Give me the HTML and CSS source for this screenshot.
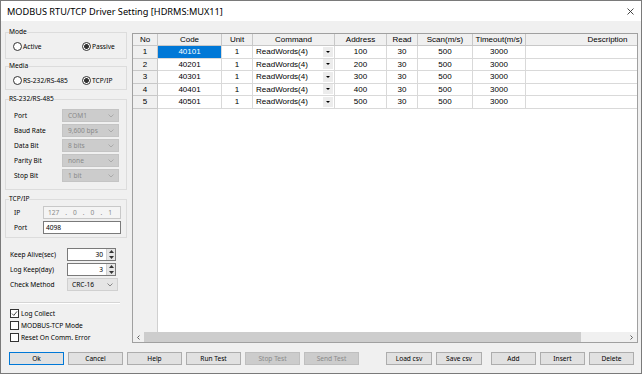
FILE: index.html
```html
<!DOCTYPE html>
<html lang="en">

<head>
    <meta charset="UTF-8">
    <title>MODBUS RTU/TCP Driver Setting</title>
    <link rel="stylesheet" href="styles.css">
</head>

<body>
    <div class="window">
        <div class="titlebar">
            <span class="title">MODBUS RTU/TCP Driver Setting [HDRMS:MUX11]</span>
            <svg class="close" width="7" height="7" viewBox="0 0 7 7">
                <path d="M0.5 0.5 L6.5 6.5 M6.5 0.5 L0.5 6.5" stroke="#333" stroke-width="0.9" fill="none" />
            </svg>
        </div>

        <div class="main">
            <div class="side">
                <fieldset class="group mode">
                    <legend>Mode</legend>
                    <div class="radios">
                        <label class="radio"><i></i>Active</label>
                        <label class="radio on"><i></i>Passive</label>
                    </div>
                </fieldset>

                <fieldset class="group media">
                    <legend>Media</legend>
                    <div class="radios">
                        <label class="radio"><i></i>RS-232/RS-485</label>
                        <label class="radio on"><i></i>TCP/IP</label>
                    </div>
                </fieldset>

                <fieldset class="group serial">
                    <legend>RS-232/RS-485</legend>
                    <div class="fields">
                        <div class="field"><span>Port</span><div class="combo off">COM1<svg width="6" height="4" viewBox="0 0 6 4"><path d="M0.5 0.5 L3 3 L5.5 0.5" stroke="#aaa" fill="none" /></svg></div></div>
                        <div class="field"><span>Baud Rate</span><div class="combo off">9,600 bps<svg width="6" height="4" viewBox="0 0 6 4"><path d="M0.5 0.5 L3 3 L5.5 0.5" stroke="#aaa" fill="none" /></svg></div></div>
                        <div class="field"><span>Data Bit</span><div class="combo off">8 bits<svg width="6" height="4" viewBox="0 0 6 4"><path d="M0.5 0.5 L3 3 L5.5 0.5" stroke="#aaa" fill="none" /></svg></div></div>
                        <div class="field"><span>Parity Bit</span><div class="combo off">none<svg width="6" height="4" viewBox="0 0 6 4"><path d="M0.5 0.5 L3 3 L5.5 0.5" stroke="#aaa" fill="none" /></svg></div></div>
                        <div class="field"><span>Stop Bit</span><div class="combo off">1 bit<svg width="6" height="4" viewBox="0 0 6 4"><path d="M0.5 0.5 L3 3 L5.5 0.5" stroke="#aaa" fill="none" /></svg></div></div>
                    </div>
                </fieldset>

                <fieldset class="group tcp">
                    <legend>TCP/IP</legend>
                    <div class="fields">
                        <div class="field"><span>IP</span>
                            <div class="ip"><span>127</span><span>.</span><span>0</span><span>.</span><span>0</span><span>.</span><span>1</span></div>
                        </div>
                        <div class="field"><span>Port</span><div class="text-box">4098</div></div>
                    </div>
                </fieldset>

                <div class="options">
                    <div class="field"><span>Keep Alive(sec)</span>
                        <div class="spin"><span>30</span><div class="arrows"><svg width="5" height="3" viewBox="0 0 5 3"><path d="M0 3 L2.5 0 L5 3Z" fill="#333" /></svg><svg width="5" height="3" viewBox="0 0 5 3"><path d="M0 0 L2.5 3 L5 0Z" fill="#333" /></svg></div></div>
                    </div>
                    <div class="field"><span>Log Keep(day)</span>
                        <div class="spin"><span>3</span><div class="arrows"><svg width="5" height="3" viewBox="0 0 5 3"><path d="M0 3 L2.5 0 L5 3Z" fill="#333" /></svg><svg width="5" height="3" viewBox="0 0 5 3"><path d="M0 0 L2.5 3 L5 0Z" fill="#333" /></svg></div></div>
                    </div>
                    <div class="field"><span>Check Method</span>
                        <div class="combo method">CRC-16<svg width="6" height="4" viewBox="0 0 6 4"><path d="M0.5 0.5 L3 3 L5.5 0.5" stroke="#888" fill="none" /></svg></div>
                    </div>
                </div>

                <div class="sep"></div>

                <div class="checks">
                    <label class="check on"><i><svg width="7" height="7" viewBox="0 0 7 7"><path d="M1 3.6 L2.8 5.4 L6 1.4" stroke="#333" stroke-width="0.9" fill="none" /></svg></i>Log Collect</label>
                    <label class="check"><i></i>MODBUS-TCP Mode</label>
                    <label class="check"><i></i>Reset On Comm. Error</label>
                </div>
            </div>

            <div class="grid">
                <div class="view">
                    <div class="sheet">
                        <div class="hd">No</div><div class="hd">Code</div><div class="hd">Unit</div><div class="hd">Command</div><div class="hd">Address</div><div class="hd">Read</div><div class="hd">Scan(m/s)</div><div class="hd">Timeout(m/s)</div><div class="hd">Description</div>

                        <div class="rh">1</div><div class="sel">40101</div><div>1</div><div class="cmd">ReadWords(4)<span class="drop"><svg width="4" height="2" viewBox="0 0 4 2"><path d="M0 0 L2 2 L4 0Z" fill="#000" /></svg></span></div><div>100</div><div>30</div><div>500</div><div>3000</div><div></div>

                        <div class="rh">2</div><div>40201</div><div>1</div><div class="cmd">ReadWords(4)<span class="drop"><svg width="4" height="2" viewBox="0 0 4 2"><path d="M0 0 L2 2 L4 0Z" fill="#000" /></svg></span></div><div>200</div><div>30</div><div>500</div><div>3000</div><div></div>

                        <div class="rh">3</div><div>40301</div><div>1</div><div class="cmd">ReadWords(4)<span class="drop"><svg width="4" height="2" viewBox="0 0 4 2"><path d="M0 0 L2 2 L4 0Z" fill="#000" /></svg></span></div><div>300</div><div>30</div><div>500</div><div>3000</div><div></div>

                        <div class="rh">4</div><div>40401</div><div>1</div><div class="cmd">ReadWords(4)<span class="drop"><svg width="4" height="2" viewBox="0 0 4 2"><path d="M0 0 L2 2 L4 0Z" fill="#000" /></svg></span></div><div>400</div><div>30</div><div>500</div><div>3000</div><div></div>

                        <div class="rh">5</div><div>40501</div><div>1</div><div class="cmd">ReadWords(4)<span class="drop"><svg width="4" height="2" viewBox="0 0 4 2"><path d="M0 0 L2 2 L4 0Z" fill="#000" /></svg></span></div><div>500</div><div>30</div><div>500</div><div>3000</div><div></div>
                    </div>
                    <div class="filler"></div>
                </div>
                <div class="hscroll">
                    <span class="arr"><svg width="3" height="5" viewBox="0 0 3 5"><path d="M2.5 0.5 L0.5 2.5 L2.5 4.5" stroke="#606060" fill="none" /></svg></span>
                    <span class="thumb"></span>
                    <span class="track"></span>
                    <span class="arr"><svg width="3" height="5" viewBox="0 0 3 5"><path d="M0.5 0.5 L2.5 2.5 L0.5 4.5" stroke="#606060" fill="none" /></svg></span>
                </div>
            </div>
        </div>

        <div class="actions">
            <div class="btn-group test">
                <button class="btn default">Ok</button>
                <button class="btn">Cancel</button>
                <button class="btn">Help</button>
                <button class="btn">Run Test</button>
                <button class="btn" disabled>Stop Test</button>
                <button class="btn" disabled>Send Test</button>
            </div>
            <div class="btn-group csv">
                <button class="btn">Load csv</button>
                <button class="btn">Save csv</button>
            </div>
            <div class="btn-group rows">
                <button class="btn">Add</button>
                <button class="btn">Insert</button>
                <button class="btn">Delete</button>
            </div>
        </div>
    </div>
</body>

</html>
```

FILE: styles.css
```css
* {
    box-sizing: border-box;
}

body {
    margin: 0;
    background: #fff;
    font-family: "Noto Sans", sans-serif;
    font-size: 6.6px;
    color: #000;
}

.window {
    width: 642px;
    height: 374px;
    border: 1px solid #7a7a7a;
    background: #f0f0f0;
    display: flex;
    flex-direction: column;
}

.titlebar {
    height: 20px;
    background: #fff;
    display: flex;
    align-items: center;
    justify-content: space-between;
    padding: 0 7px 0 6px;
    font-size: 9.2px;
    flex-shrink: 0;
}

.main {
    height: 322px;
    display: flex;
    flex-shrink: 0;
}

/* left panel */
.side {
    width: 131px;
    padding: 7px 0 0 4px;
    flex-shrink: 0;
}

.group {
    width: 122px;
    min-width: 0;
    margin: 0;
    border: 1px solid #dcdcdc;
    padding: 0 3px 6px 3px;
}

.group legend {
    padding: 0;
    line-height: 8px;
}

.media {
    margin-top: 3px;
    padding-bottom: 3px;
}

.serial {
    margin-top: 5px;
    padding-bottom: 7px;
}

.tcp {
    margin-top: 5px;
    padding-bottom: 3px;
}

.radios {
    display: grid;
    grid-template-columns: 69px auto;
    align-items: center;
    height: 12px;
    margin: 4px 0 0 4px;
}

.radio,
.check {
    display: flex;
    align-items: center;
    gap: 1px;
    white-space: nowrap;
}

.radio i {
    width: 9px;
    height: 9px;
    border: 1px solid #333;
    border-radius: 50%;
    background: #fff;
}

.radio.on i {
    background: radial-gradient(circle, #333 0 2.1px, #fff 2.7px);
}

.fields {
    display: flex;
    flex-direction: column;
    gap: 2px;
    margin: 6px 0 0 5px;
}

.tcp .fields {
    margin-top: 3px;
}

.field {
    display: grid;
    grid-template-columns: 48px 57px;
    align-items: center;
    height: 13px;
    white-space: nowrap;
}

.tcp .field {
    grid-template-columns: 29px 78px;
}

.combo {
    height: 13px;
    display: flex;
    align-items: center;
    justify-content: space-between;
    padding: 0 4px 0 5px;
}

.combo.off {
    background: #cccccc;
    border: 1px solid #c4c4c4;
    color: #8a8a8a;
}

.ip {
    height: 13px;
    border: 1px solid #c8c8c8;
    background: #f4f4f4;
    color: #8a8a8a;
    display: flex;
    align-items: center;
    justify-content: space-between;
    padding: 0 8px 0 4px;
}

.text-box {
    height: 13px;
    border: 1px solid #7a7a7a;
    background: #fff;
    padding-left: 2px;
    line-height: 11px;
}

.options {
    margin-top: 10px;
    padding-left: 5px;
    display: flex;
    flex-direction: column;
    gap: 2px;
}

.options .field {
    grid-template-columns: 57px 51px;
}

.spin {
    width: 49px;
    height: 13px;
    border: 1px solid #7a7a7a;
    background: #fff;
    display: flex;
}

.spin span {
    flex: 1;
    text-align: right;
    padding-right: 3px;
    line-height: 11px;
}

.spin .arrows {
    width: 9px;
    background: #e6e6e6;
    border-left: 1px solid #d0d0d0;
    display: flex;
    flex-direction: column;
    align-items: center;
    justify-content: space-around;
}

.combo.method {
    background: #e5e5e5;
    border: 1px solid #d0d0d0;
    padding-left: 4px;
}

.sep {
    width: 110px;
    margin: 11px 0 0 5px;
    border-top: 1px solid #d5d5d5;
    border-bottom: 1px solid #fff;
}

.checks {
    margin-top: 4px;
    padding-left: 5px;
    display: flex;
    flex-direction: column;
    gap: 1px;
}

.check {
    height: 11px;
    gap: 2px;
}

.check i {
    width: 9px;
    height: 9px;
    border: 1px solid #333;
    background: #fff;
    display: flex;
    align-items: center;
    justify-content: center;
}

/* data grid */
.grid {
    width: 506px;
    height: 310px;
    margin-top: 12px;
    border: 1px solid #a0a0a0;
    background: #fff;
    display: flex;
    flex-direction: column;
    flex-shrink: 0;
}

.view {
    flex: 1;
    overflow: hidden;
    display: flex;
    flex-direction: column;
}

.sheet {
    display: grid;
    grid-template-columns: 25px 64px 31px 82px 52px 31px 55px 53px 164px;
    grid-template-rows: 12px repeat(5, 12.5px);
    width: 557px;
    font-family: "Liberation Sans", Arial, sans-serif;
    font-size: 8px;
    flex-shrink: 0;
}

.sheet > div {
    border-right: 1px solid #d9d9d9;
    border-bottom: 1px solid #d9d9d9;
    display: flex;
    align-items: center;
    justify-content: center;
    white-space: nowrap;
}

.sheet .hd,
.sheet .rh {
    background: #f0f0f0;
    border-color: #c8c8c8;
}

.sheet .sel {
    background: #0078d7;
    color: #fff;
}

.sheet .cmd {
    justify-content: space-between;
    padding-left: 3px;
}

.drop {
    width: 10px;
    height: 10px;
    margin-right: 1px;
    background: #ececec;
    display: flex;
    align-items: center;
    justify-content: center;
}

.filler {
    flex: 1;
    background: linear-gradient(90deg, #f0f0f0 0 24px, #d0d0d0 24px 25px, #fff 25px);
}

.hscroll {
    height: 10px;
    display: flex;
    background: #f0f0f0;
    flex-shrink: 0;
}

.arr {
    width: 11px;
    display: flex;
    align-items: center;
    justify-content: center;
}

.thumb {
    width: 437px;
    background: #cdcdcd;
}

.track {
    flex: 1;
}

/* buttons */
.actions {
    display: flex;
    padding: 9px 0 0 8px;
}

.btn-group {
    display: flex;
    gap: 4px;
}

.csv {
    margin-left: 27px;
}

.rows {
    margin-left: 9px;
}

.btn {
    width: 55px;
    height: 13px;
    padding: 0;
    border: 1px solid #adadad;
    background: #e1e1e1;
    font-family: "Noto Sans", sans-serif;
    font-size: 6.6px;
    color: #000;
}

.csv .btn {
    width: 46px;
}

.rows .btn {
    width: 45px;
}

.btn.default {
    border-color: #0078d7;
}

.btn:disabled {
    background: #cccccc;
    border-color: #bfbfbf;
    color: #8a8a8a;
}
```
